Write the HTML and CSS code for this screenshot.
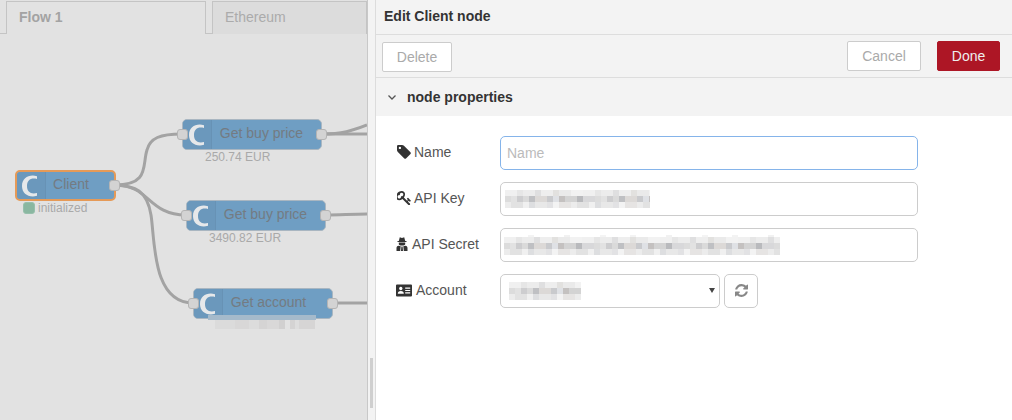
FILE: index.html
```html
<!DOCTYPE html>
<html lang="en">
<head>
<meta charset="utf-8">
<title>Edit Client node</title>
<link rel="stylesheet" href="styles.css">
</head>
<body>
<div class="app">
  <main class="workspace">
    <nav class="tabs">
      <div class="tab tab-active">Flow 1</div>
      <div class="tab">Ethereum</div>
    </nav>
    <section class="canvas">
      <svg class="wires" width="367" height="386" viewBox="0 34 367 386">
        <g fill="none" stroke="#a3a3a3" stroke-width="3">
          <path d="M115 185C150 185 142 165 147 150C150 138 160 134 182 134"/>
          <path d="M115 185C150 185 148 215 186 215"/>
          <path d="M115 185C135 186 147 190 151 215C155 240 152 303 193 303"/>
          <path d="M322 134C342 134 352 131 367 125"/>
          <path d="M322 134H367"/>
          <path d="M326 215C340 215 352 214 367 214"/>
          <path d="M333 303H367"/>
        </g>
      </svg>

      <div class="node node-client">
        <span class="node-icon"><svg width="16" height="22" viewBox="0 0 16 22"><path class="c-glyph" d="M15 1.200C7 -1 0 3 0 11C0 19 7 23 15 20.800V18C9 19.500 5 17 5 11C5 5 9 2.500 15 4Z"/></svg></span>
        <span class="node-label">Client</span>
        <i class="port port-out"></i>
      </div>
      <div class="status status-client"><i class="dot"></i>initialized</div>

      <div class="node node-buy1">
        <span class="node-icon"><svg width="16" height="22" viewBox="0 0 16 22"><path class="c-glyph" d="M15 1.200C7 -1 0 3 0 11C0 19 7 23 15 20.800V18C9 19.500 5 17 5 11C5 5 9 2.500 15 4Z"/></svg></span>
        <span class="node-label">Get buy price</span>
        <i class="port port-in"></i><i class="port port-out"></i>
      </div>
      <div class="status status-buy1">250.74 EUR</div>

      <div class="node node-buy2">
        <span class="node-icon"><svg width="16" height="22" viewBox="0 0 16 22"><path class="c-glyph" d="M15 1.200C7 -1 0 3 0 11C0 19 7 23 15 20.800V18C9 19.500 5 17 5 11C5 5 9 2.500 15 4Z"/></svg></span>
        <span class="node-label">Get buy price</span>
        <i class="port port-in"></i><i class="port port-out"></i>
      </div>
      <div class="status status-buy2">3490.82 EUR</div>

      <div class="node node-account">
        <span class="node-icon"><svg width="16" height="22" viewBox="0 0 16 22"><path class="c-glyph" d="M15 1.200C7 -1 0 3 0 11C0 19 7 23 15 20.800V18C9 19.500 5 17 5 11C5 5 9 2.500 15 4Z"/></svg></span>
        <span class="node-label">Get account</span>
        <i class="port port-in"></i><i class="port port-out"></i>
      </div>
      <div class="account-bar"></div>
      <div class="blur-status"></div>
    </section>
  </main>

  <div class="splitter"><i class="thumb"></i></div>

  <aside class="editor">
    <header class="editor-title">Edit Client node</header>
    <div class="toolbar">
      <button class="btn btn-delete">Delete</button>
      <div class="toolbar-right">
        <button class="btn btn-cancel">Cancel</button>
        <button class="btn btn-done">Done</button>
      </div>
    </div>
    <div class="section-head">
      <svg class="chevron" width="8" height="5" viewBox="0 0 8 5"><path d="M0.500 0.500L4 4L7.500 0.500"/></svg>
      <span>node properties</span>
    </div>
    <form class="form">
      <div class="row">
        <label class="field-label">
          <svg class="ico" width="14" height="14" viewBox="128 128 1536 1536"><path d="M576 448q0-53-37.500-90.500t-90.500-37.500-90.500 37.500-37.500 90.500 37.500 90.500 90.500 37.500 90.500-37.500 37.500-90.500zm1067 576q0 53-37 90l-491 492q-39 37-91 37-53 0-90-37l-715-716q-38-37-64.500-101t-26.500-117v-416q0-52 38-90t90-38h416q53 0 117 26.500t102 64.500l715 714q37 39 37 91z"/></svg>
          Name
        </label>
        <input class="control control-focus" type="text" placeholder="Name">
      </div>
      <div class="row">
        <label class="field-label">
          <svg class="ico" width="14" height="14" viewBox="128 128 1560 1560"><path d="M832 512q0-80-56-136t-136-56-136 56-56 136q0 42 19 83-41-19-83-19-80 0-136 56t-56 136 56 136 136 56 136-56 56-136q0-42-19-83 41 19 83 19 80 0 136-56t56-136zm851 704q0 17-49 66t-66 49q-9 0-28.500-16t-36.500-33-38.500-40-24.500-26l-96 96 220 220q28 28 28 68 0 42-39 81t-81 39q-40 0-68-28l-671-671q-176 131-365 131-163 0-265.500-102.500t-102.500-265.500q0-160 95-313t248-248 313-95q163 0 265.500 102.500t102.500 265.500q0 189-131 365l355 355 96-96q-2-2-26-24.500t-40-38.500-33-36.500-16-28.500q0-17 49-66t66-49q13 0 23 10 6 6 46 44.500t82 79.500 86.500 86 73 78 28.500 41z"/></svg>
          API Key
        </label>
        <div class="control"><div class="blur blur-key"></div></div>
      </div>
      <div class="row">
        <label class="field-label">
          <svg class="ico ico-secret" width="12" height="14" viewBox="0 0 12 14"><path d="M3.800 0.300L6 1L8.200 0.300L9.200 4H10.500V5H1.500V4H2.800ZM2.800 5.500H9.200V7.200C9.200 8 7.800 8.600 6 8.600C4.200 8.600 2.800 8 2.800 7.200ZM2.500 8.700L4.700 9.200L4.200 14H0.500V11C0.500 9.800 1.200 9 2.500 8.700ZM9.500 8.700C10.800 9 11.500 9.800 11.500 11V14H7.800L7.300 9.200ZM5.400 9.500H6.600L7 14H5Z"/></svg>
          API Secret
        </label>
        <div class="control"><div class="blur blur-secret"></div></div>
      </div>
      <div class="row">
        <label class="field-label">
          <svg class="ico ico-card" width="16" height="13" viewBox="0 0 16 13"><path fill-rule="evenodd" d="M1 0.500H15A1 1 0 0 1 16 1.500V11.500A1 1 0 0 1 15 12.500H1A1 1 0 0 1 0 11.500V1.500A1 1 0 0 1 1 0.500ZM4.800 2.800A1.700 1.700 0 1 0 4.801 2.800ZM1.800 9.800H7.800C7.800 8 6.800 7 4.800 7C2.800 7 1.800 8 1.800 9.800ZM9.200 3.500V4.700H14.200V3.500ZM9.200 5.900V7.100H14.200V5.900ZM9.200 8.300V9.500H14.200V8.300Z"/></svg>
          Account
        </label>
        <div class="control control-select">
          <div class="blur blur-account"></div>
          <i class="select-arrow"></i>
        </div>
        <button class="icon-btn" type="button">
          <svg width="13" height="13" viewBox="128 128 1536 1536"><path d="M1639 1056q0 5-1 7-64 268-268 434.500t-478 166.500q-146 0-282.500-55t-243.500-157l-129 129q-19 19-45 19t-45-19-19-45v-448q0-26 19-45t45-19h448q26 0 45 19t19 45-19 45l-137 137q71 66 161 102t187 36q134 0 250-65t186-179q11-17 53-117 8-23 30-23h192q13 0 22.500 9.500t9.500 22.500zm25-800v448q0 26-19 45t-45 19h-448q-26 0-45-19t-19-45 19-45l138-138q-148-137-349-137-134 0-250 65t-186 179q-11 17-53 117-8 23-30 23h-199q-13 0-22.500-9.500t-9.500-22.500v-7q65-268 270-434.500t480-166.500q146 0 284 55.500t245 156.500l130-129q19-19 45-19t45 19 19 45z"/></svg>
        </button>
      </div>
    </form>
  </aside>
</div>
</body>
</html>
```

FILE: styles.css
```css
:root {
  --row-a: linear-gradient(90deg, #f0f0f0 0 12px, #e6e6e6 12px 18px, #ececec 18px 30px, #dfdfe0 30px 36px, #eeeeee 36px 48px, #e2e1df 48px 54px, #eaeaea 54px 66px, #f2f2f2 66px 78px);
  --row-b: linear-gradient(90deg, #dcdcdc 0 6px, #e2e2e2 6px 12px, #cdcdcf 12px 18px, #dadada 18px 24px, #bfc0c3 24px 30px, #dcd9d7 30px 42px, #c9cacd 42px 48px, #dfe1e5 48px 54px, #c4c1c0 54px 60px, #d3d3d3 60px 72px, #b9babd 72px 78px, #d8d8da 78px 90px);
  --row-c: linear-gradient(90deg, #ececec 0 6px, #e2e2e2 6px 18px, #f0f0f0 18px 24px, #dddee0 24px 30px, #e8e8e8 30px 42px, #e2e2e4 42px 48px, #f3f3f3 48px 54px, #e6e4e3 54px 66px);
  --row-d: linear-gradient(90deg, #fff 0 24px, #f3f3f3 24px 30px, #fff 30px 60px, #f1f1f1 60px 66px, #fff 66px 96px, #f4f4f4 96px 102px);
}

* { box-sizing: border-box; }

html, body {
  margin: 0;
  height: 100%;
  overflow: hidden;
}

body {
  font-family: "Liberation Sans", Arial, sans-serif;
  font-size: 14px;
  color: #555;
  background: #fff;
}

.app {
  display: flex;
  width: 1012px;
  height: 420px;
  overflow: hidden;
}

/* workspace */
.workspace {
  flex: 0 0 367px;
  display: flex;
  flex-direction: column;
  background: #e2e2e2;
  overflow: hidden;
}

.tabs {
  flex: 0 0 34px;
  display: flex;
  gap: 6px;
  align-items: flex-end;
  padding-left: 6px;
  border-bottom: 1px solid #c4c4c4;
}

.tab {
  flex: 0 0 155px;
  height: 33px;
  margin-bottom: -1px;
  padding: 7px 0 0 12px;
  color: #ababab;
  line-height: 17px;
  background: #dcdcdc;
  border: 1px solid #c4c4c4;
  border-bottom: 0;
}

.tab-active {
  flex: 0 0 200px;
  font-weight: 700;
  color: #a3a3a3;
  background: #e2e2e2;
  height: 33px;
  position: relative;
  z-index: 1;
}

.canvas {
  position: relative;
  flex: 1;
}

.wires {
  position: absolute;
  left: 0;
  top: 0;
}

.node {
  position: absolute;
  display: flex;
  align-items: center;
  width: 140px;
  height: 31px;
  background: #6f9ec3;
  border: 1px solid #a9b6c1;
  border-radius: 5px;
}

.node-client { left: 15px; top: 136px; width: 101px; border: 2px solid #e59a58; }
.node-buy1 { left: 182px; top: 85px; }
.node-buy2 { left: 186px; top: 166px; }
.node-account { left: 193px; top: 254px; }

.node-icon {
  flex: 0 0 29px;
  align-self: stretch;
  display: flex;
  align-items: center;
  padding-left: 6px;
  background: #6b98bc;
  border-radius: 4px 0 0 4px;
  border-right: 1px solid #6792b5;
}

.node-client .node-icon { padding-left: 5px; }

.c-glyph { fill: #e6e8ea; }

.node-label {
  flex: 1;
  margin-top: -2px;
  text-align: center;
  color: #747b82;
  line-height: 17px;
}

.node-client .node-label { padding-right: 18px; }
.node-buy1 .node-label, .node-buy2 .node-label { padding-right: 10px; }
.node-account .node-label { padding-right: 18px; }

.port {
  position: absolute;
  top: 50%;
  width: 11px;
  height: 11px;
  margin-top: -6px;
  background: #d3d3d3;
  border: 1px solid #b4b4b4;
  border-radius: 3px;
}

.port-in { left: -6px; }
.port-out { right: -6px; }

.status {
  position: absolute;
  display: flex;
  align-items: center;
  gap: 3px;
  font-size: 12px;
  line-height: 14px;
  color: #a9a9a9;
}

.status-client { left: 23px; top: 167px; }
.status-buy1 { left: 205px; top: 116px; }
.status-buy2 { left: 209px; top: 197px; }

.dot {
  width: 12px;
  height: 12px;
  background: #8ab7a1;
  border: 1px solid #97c0ac;
  border-radius: 3px;
}

.account-bar {
  position: absolute;
  left: 208px;
  top: 281px;
  width: 108px;
  height: 5px;
  background: #a5bacb;
}

.blur-status {
  position: absolute;
  left: 215px;
  top: 286px;
  width: 100px;
  height: 9px;
  background-image: linear-gradient(90deg, #dbdbdb 0 20px, #d8d7d7 20px 34px, #dcdcdc 34px 44px, #d5d4d4 44px 52px, #d9d8d8 52px 64px, #d1d0d0 64px 70px, #e2e2e2 70px 75px, #d4d3d3 75px 80px, #dddddd 80px 84px, #d6d5d5 84px 100px);
}

/* splitter */
.splitter {
  flex: 0 0 9px;
  position: relative;
  background: #f3f3f3;
  border-left: 1px solid #c8c8c8;
  border-right: 1px solid #dcdcdc;
}

.thumb {
  position: absolute;
  left: 2px;
  top: 358px;
  width: 3px;
  height: 50px;
  background: #cfcfcf;
}

/* editor */
.editor {
  flex: 1;
  display: flex;
  flex-direction: column;
  background: #fff;
}

.editor-title {
  flex: 0 0 35px;
  padding: 8px 0 0 8px;
  font-weight: 700;
  line-height: 17px;
  color: #333;
  background: #f3f3f3;
  border-bottom: 1px solid #ddd;
}

.toolbar {
  flex: 0 0 43px;
  display: flex;
  justify-content: space-between;
  padding: 6px 12px 0 6px;
  background: #f3f3f3;
  border-bottom: 1px solid #ddd;
}

.toolbar-right {
  display: flex;
  gap: 16px;
}

.btn {
  height: 30px;
  padding: 0;
  font: inherit;
  line-height: 28px;
  color: #aaa;
  background: #fff;
  border: 1px solid #ccc;
  border-radius: 2px;
}

.btn-delete { width: 70px; margin-top: 1px; }
.btn-cancel { width: 74px; }

.btn-done {
  width: 63px;
  color: #eee;
  background: #ad1625;
  border-color: #ad1625;
}

.section-head {
  flex: 0 0 38px;
  display: flex;
  align-items: center;
  gap: 11px;
  padding-left: 12px;
  font-weight: 700;
  color: #333;
  background: #f3f3f3;
}

.chevron {
  fill: none;
  stroke: #555;
  stroke-width: 1.300;
}

.form {
  display: flex;
  flex-direction: column;
  gap: 12px;
  padding: 20px 0 0 20px;
}

.row {
  display: flex;
  align-items: center;
  gap: 4px;
}

.field-label {
  flex: 0 0 104px;
  display: flex;
  align-items: center;
  gap: 3px;
  margin-right: -4px;
  padding-bottom: 2px;
  color: #555;
}

.ico { fill: #333; margin-left: 1px; }
.ico-secret { margin-left: 0; margin-right: 1px; }
.ico-card { margin-left: 0; margin-right: 1px; }

.control {
  flex: 0 0 418px;
  height: 34px;
  padding: 0 6px;
  font: inherit;
  color: #555;
  background: #fff;
  border: 1px solid #ccc;
  border-radius: 5px;
  outline: 0;
}

.control::placeholder { color: #bbb; opacity: 1; }

.control-focus { border-color: #85b4ea; }

.control-select {
  flex-basis: 220px;
  position: relative;
}

.select-arrow {
  position: absolute;
  right: 4px;
  top: 13px;
  border-style: solid;
  border-width: 5px 3.500px 0;
  border-color: #444 transparent transparent;
}

.icon-btn {
  flex: 0 0 34px;
  height: 34px;
  padding: 2px 0 0;
  background: #fff;
  border: 1px solid #ccc;
  border-radius: 5px;
}

.icon-btn svg { fill: #888; }

.blur {
  background-repeat: repeat-x;
  background-image: var(--row-a), var(--row-b), var(--row-c);
  background-size: 78px 6px, 90px 6px, 66px 6px;
  background-position: 0 0, 0 6px, 0 12px;
}

.blur-key {
  width: 145px;
  height: 18px;
  margin: 7px 0 0 -2px;
}

.blur-secret {
  width: 276px;
  height: 22px;
  margin: 6px 0 0 -3px;
  background-image: var(--row-d), var(--row-a), var(--row-b), var(--row-c);
  background-size: 102px 2px, 78px 6px, 90px 6px, 66px 6px;
  background-position: 0 0, 0 2px, 0 8px, 0 14px;
}

.blur-account {
  width: 72px;
  height: 18px;
  margin: 7px 0 0 2px;
}
```
